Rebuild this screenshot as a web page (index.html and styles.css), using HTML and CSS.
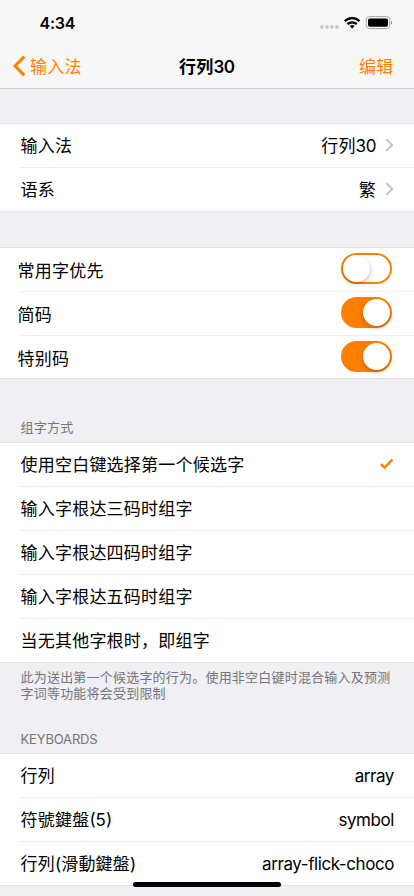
FILE: index.html
```html
<!DOCTYPE html>
<html lang="zh-CN">
<head>
<meta charset="utf-8">
<meta name="viewport" content="width=device-width, initial-scale=1">
<title>行列30</title>
<link rel="stylesheet" href="styles.css">
</head>
<body>
<header class="top">
  <div class="status">
    <span class="time">4:34</span>
    <svg class="indicators" width="74" height="16" viewBox="0 0 74 16">
      <g fill="#cbcbcd"><circle cx="1.9" cy="12" r="1.9"/><circle cx="6.9" cy="12" r="1.9"/><circle cx="11.9" cy="12" r="1.9"/><circle cx="16.9" cy="12" r="1.9"/></g>
      <g fill="none" stroke="#000" stroke-width="2.3"><path d="M24.7 6.1a10.6 10.6 0 0 1 14.8 0"/><path d="M27.5 9.2a6.7 6.7 0 0 1 9.2 0"/></g>
      <path d="M32.1 13.6l-2.5-2.5a3.7 3.7 0 0 1 5 0z" fill="#000"/>
      <rect x="46.2" y="1.6" width="23.6" height="12" rx="3.4" fill="none" stroke="#a3a3a5" stroke-width="1"/>
      <rect x="48" y="3.4" width="20" height="8.4" rx="1.8" fill="#000"/>
      <path d="M71 5.7a2.2 2.2 0 0 1 0 3.9z" fill="#8e8e90"/>
    </svg>
  </div>
  <nav class="nav">
    <a class="back"><svg width="14" height="22" viewBox="0 0 14 22"><path d="M11.3 1.6L2 11l9.3 9.4" fill="none" stroke="#ff8000" stroke-width="3"/></svg><span>输入法</span></a>
    <h1>行列<span class="latin">30</span></h1>
    <a class="edit">编辑</a>
  </nav>
</header>
<main>
  <section class="group general">
    <div class="row"><span>输入法</span><span class="value">行列<span class="latin">30</span><svg class="chev" width="9" height="14" viewBox="0 0 9 14"><path d="M1.3 1.2L7.2 7l-5.9 5.8" fill="none" stroke="#c4c4c8" stroke-width="2"/></svg></span></div>
    <div class="row"><span>语系</span><span class="value">繁<svg class="chev" width="9" height="14" viewBox="0 0 9 14"><path d="M1.3 1.2L7.2 7l-5.9 5.8" fill="none" stroke="#c4c4c8" stroke-width="2"/></svg></span></div>
  </section>
  <section class="group toggles">
    <div class="row"><span>常用字优先</span><span class="switch"></span></div>
    <div class="row"><span>简码</span><span class="switch on"></span></div>
    <div class="row"><span>特别码</span><span class="switch on"></span></div>
  </section>
  <h2 class="heading compose">组字方式</h2>
  <section class="group">
    <div class="row"><span>使用空白键选择第一个候选字</span><svg class="check" width="14" height="12" viewBox="0 0 14 12"><path d="M1 6.1l3.6 3.5L12.4 1.6" fill="none" stroke="#ff8000" stroke-width="2.5"/></svg></div>
    <div class="row"><span>输入字根达三码时组字</span></div>
    <div class="row"><span>输入字根达四码时组字</span></div>
    <div class="row"><span>输入字根达五码时组字</span></div>
    <div class="row"><span>当无其他字根时，即组字</span></div>
  </section>
  <p class="note">此为送出第一个候选字的行为。使用非空白键时混合输入及预测<br>字词等功能将会受到限制</p>
  <h2 class="heading boards"><span class="latin">KEYBOARDS</span></h2>
  <section class="group keyboards" lang="zh-TW">
    <div class="row"><span>行列</span><span class="latin">array</span></div>
    <div class="row"><span>符號鍵盤<span class="paren">(5)</span></span><span class="latin">symbol</span></div>
    <div class="row"><span>行列<span class="paren">(</span>滑動鍵盤<span class="paren">)</span></span><span class="latin">array-flick-choco</span></div>
  </section>
</main>
<div class="home"></div>
</body>
</html>
```
FILE: styles.css
```css
* { box-sizing: border-box; }

body {
  margin: 0;
  height: 896px;
  overflow: hidden;
  background: #efeff4;
  color: #000;
  font: 17px/24px Inter, "Noto Sans CJK SC", sans-serif;
  font-weight: 400;
  letter-spacing: 0.22px;
}

.latin { letter-spacing: -0.42px; }

.paren { letter-spacing: 0; }

.top {
  height: 89px;
  background: #f7f7f7;
  border-bottom: 1px solid #d0d0d4;
}

.status {
  height: 44px;
  display: flex;
  justify-content: space-between;
  padding: 11px 20px 0 39.5px;
}

.time {
  font-size: 16px;
  font-weight: 600;
  letter-spacing: -0.2px;
}

.indicators { margin-top: 4px; }

.nav {
  height: 44px;
  display: grid;
  grid-template-columns: 1fr auto 1fr;
  align-items: center;
  padding: 1px 20.5px 0 13px;
  color: #ff8000;
}

.back { display: flex; align-items: center; gap: 3px; }

.back svg { margin-top: -1px; }

.back span, .nav h1, .edit { padding-top: 1px; }

.nav h1 {
  margin: 0 0 0 7px;
  color: #000;
  font-size: 17px;
  font-weight: 600;
}

.edit { text-align: right; }

.group {
  background: #fff;
  border-top: 1px solid #e2e2e6;
  border-bottom: 1px solid #e2e2e6;
}

.general { margin-top: 34px; }

.toggles { margin-top: 35px; }

.row {
  height: 44px;
  margin-left: 20px;
  padding: 0 20px 0 0.5px;
  display: flex;
  align-items: center;
  justify-content: space-between;
  border-bottom: 1px solid #eeeeef;
}

.row:last-child { height: 43px; border-bottom: 0; }

.toggles .row:last-child { height: 42px; }

.value { display: flex; align-items: center; }

.chev { margin: -1px 0 0 9px; }

.check { margin-top: -1px; }

.toggles .row > span:first-child { margin-left: -3px; padding-top: 3px; }

.toggles .row:last-child > span:first-child { padding-top: 4px; }

.switch {
  width: 51px;
  height: 31px;
  margin: -2px 2px 0 0;
  display: flex;
  align-items: center;
  padding: 0 2px;
  border: 2px solid #ff8000;
  border-radius: 16px;
}

.toggles .row:last-child .switch { margin-top: -1px; }

.switch::before {
  content: "";
  flex: none;
  width: 27px;
  height: 27px;
  margin-left: -2px;
  border-radius: 50%;
  background: #fff;
  box-shadow: 0 2px 4px rgba(0, 0, 0, 0.28);
}

.switch.on { background: #ff8000; justify-content: flex-end; }

.switch.on::before { margin: 0 -2px 0 0; }

.heading, .note {
  margin: 0;
  padding: 0 20.5px;
  color: #75757a;
  font-size: 13px;
  font-weight: 400;
  line-height: 16px;
  letter-spacing: 0.21px;
}

.compose { padding-top: 40px; height: 63px; }

.note { padding-top: 6px; white-space: nowrap; }

.boards { padding-top: 30px; height: 52px; }

.boards .latin { letter-spacing: -0.16px; }

.keyboards { font-family: Inter, "Noto Sans CJK TC", sans-serif; }

.home {
  position: absolute;
  left: 133px;
  top: 882px;
  width: 148px;
  height: 5px;
  border-radius: 3px;
  background: #000;
}
```
